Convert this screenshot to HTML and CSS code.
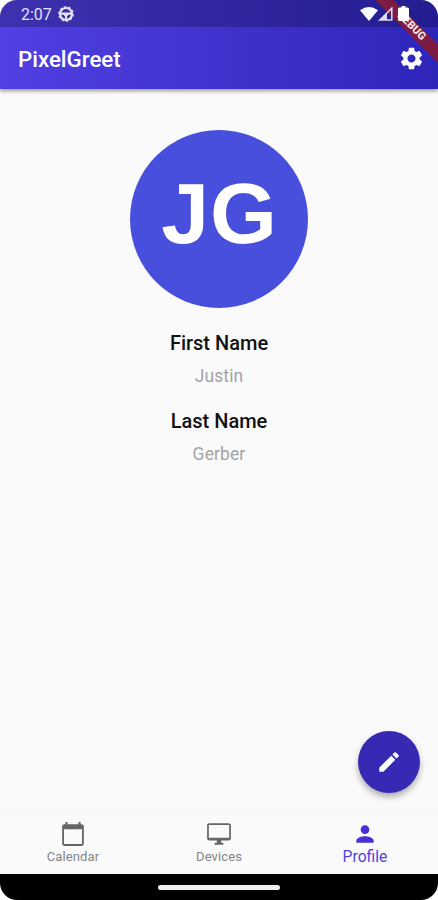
FILE: index.html
```
<!DOCTYPE html>
<html lang="en">
<head>
  <meta charset="UTF-8" />
  <meta name="viewport" content="width=device-width, initial-scale=1" />
  <title>PixelGreet</title>
  <link rel="stylesheet" href="styles.css">
</head>
<body>
  <div class="phone">

    <!-- HEADER -->
    <header class="header">
      <div class="status-bar">
        <span class="time">2:07</span>
        <svg class="status-app" viewBox="0 0 16 16">
          <circle cx="8" cy="8" r="6" fill="none" stroke="#e4e2f8" stroke-width="2.200" />
          <circle cx="8" cy="8" r="7.200" fill="none" stroke="#e4e2f8" stroke-width="1.200" stroke-dasharray="2.600 1.900" />
          <path d="M2 6.500h12v2.200H10.500L9 10.500V14H7v-3.500L5.500 8.700H2z" fill="#e4e2f8" />
        </svg>
        <div class="status-icons">
          <svg width="18" height="14" viewBox="0 0 18 14"><path d="M0 3.200Q9-3.200 18 3.200L9 14z" fill="#fff" /></svg>
          <svg width="15" height="14" viewBox="0 0 15 14">
            <path d="M1.800 13L13.800 1.200V13z" fill="none" stroke="#dedcf5" stroke-width="1.500" />
            <path d="M2 13L9 6v7z" fill="#dedcf5" />
          </svg>
          <svg class="battery" width="11" height="15" viewBox="0 0 11 15"><path d="M3.500 0h4v1.500H9.500Q11 1.500 11 3v10.500Q11 15 9.500 15h-8Q0 15 0 13.500V3q0-1.500 1.500-1.500h2z" fill="#fff" /></svg>
        </div>
      </div>
      <div class="app-bar">
        <h1 class="title">PixelGreet</h1>
        <svg class="settings" viewBox="0 0 24 24"><path fill="#fff" d="M19.14 12.94c.04-.3.06-.61.06-.94 0-.32-.02-.64-.07-.94l2.030-1.580c.18-.14.23-.41.12-.61l-1.920-3.320c-.12-.22-.37-.29-.59-.22l-2.390.96c-.5-.38-1.030-.7-1.620-.94L14.400 2.810c-.04-.24-.24-.41-.48-.41h-3.840c-.24 0-.43.17-.47.41L9.250 5.350c-.59.24-1.130.57-1.620.94L5.240 5.330c-.22-.08-.47 0-.59.22L2.740 8.870c-.12.21-.08.47.12.61l2.030 1.580c-.05.3-.09.63-.09.94s.02.64.07.94l-2.030 1.580c-.18.14-.23.41-.12.61l1.920 3.320c.12.22.37.29.59.22l2.390-.96c.5.38 1.030.7 1.620.94l.36 2.540c.05.24.24.41.48.41h3.840c.24 0 .44-.17.47-.41l.36-2.540c.59-.24 1.130-.56 1.620-.94l2.390.96c.22.08.47 0 .59-.22l1.920-3.320c.12-.22.07-.47-.12-.61zM12 15.600c-1.980 0-3.600-1.620-3.600-3.600s1.620-3.600 3.600-3.600 3.600 1.620 3.600 3.600-1.620 3.600-3.600 3.600z" /></svg>
      </div>
      <div class="debug">DEBUG</div>
    </header>

    <!-- PROFILE -->
    <main class="profile">
      <div class="avatar">JG</div>
      <div class="label">First Name</div>
      <div class="value">Justin</div>
      <div class="label">Last Name</div>
      <div class="value">Gerber</div>
    </main>

    <div class="fab">
      <svg width="26" height="26" viewBox="0 0 24 24"><path fill="#fff" d="M3 17.250V21h3.750L17.810 9.940l-3.750-3.750zM20.710 7.040c.39-.39.39-1.020 0-1.410l-2.340-2.340a.996.996 0 0 0-1.410 0l-1.830 1.830 3.750 3.750z" /></svg>
    </div>

    <!-- BOTTOM TABS -->
    <nav class="tabs">
      <div class="tab">
        <svg viewBox="0 0 24 24"><path d="M20 3h-1V1h-2v2H7V1H5v2H4c-1.100 0-2 .9-2 2v16c0 1.100.9 2 2 2h16c1.100 0 2-.9 2-2V5c0-1.100-.9-2-2-2zm.3 18.300H3.700V7.500h16.600z" /></svg>
        <span>Calendar</span>
      </div>
      <div class="tab">
        <svg viewBox="0 0 24 24"><path d="M21 2H3c-1.100 0-2 .9-2 2v12c0 1.100.9 2 2 2h7v2H8v2h8v-2h-2v-2h7c1.100 0 2-.9 2-2V4c0-1.100-.9-2-2-2zm.4 13.500H2.600V3.600h18.800z" /></svg>
        <span>Devices</span>
      </div>
      <div class="tab active">
        <svg viewBox="0 0 24 24"><path d="M12 12c2.210 0 4-1.790 4-4s-1.790-4-4-4-4 1.790-4 4 1.790 4 4 4zm0 2c-2.670 0-8 1.340-8 4v2h16v-2c0-2.660-5.330-4-8-4z" /></svg>
        <span>Profile</span>
      </div>
    </nav>
    <div class="nav-bar"><div class="handle"></div></div>
  </div>
</body>
</html>
```
FILE: styles.css
```
body {
  margin: 0;
  background: #fff;
  font-family: Roboto, sans-serif;
}

.phone {
  position: relative;
  display: flex;
  flex-direction: column;
  width: 438px;
  height: 900px;
  border-radius: 17px;
  overflow: hidden;
  background: #fafafa;
}

.header {
  position: relative;
  height: 89px;
  color: #fff;
  background: linear-gradient(to right, #5140e3, #2e25b9);
  box-shadow: 0 2px 4px rgba(0, 0, 0, 0.4);
}

.status-bar {
  display: flex;
  align-items: center;
  height: 27px;
  padding: 0 29px 0 21px;
  background: rgba(0, 0, 0, 0.22);
}

.time {
  font-size: 16px;
  line-height: 27px;
  padding-top: 2px;
  color: #e4e2f8;
}

.status-app {
  width: 16px;
  height: 16px;
  margin-left: 6px;
}

/* the system icons stay above the debug ribbon */
.status-icons {
  position: relative;
  z-index: 1;
  display: flex;
  align-items: center;
  margin-left: auto;
}

.battery {
  margin-left: 5px;
}

.app-bar {
  display: flex;
  align-items: center;
  justify-content: space-between;
  height: 62px;
  padding: 0 13px 0 18px;
}

.title {
  margin: 1px 0 0;
  font-size: 22.300px;
  font-weight: 500;
}

.settings {
  width: 27px;
  height: 27px;
}

.debug {
  position: absolute;
  top: 20px;
  right: -38px;
  width: 130px;
  height: 13px;
  transform: rotate(45deg);
  background: #7d1c43;
  color: #f3dfe6;
  font-size: 11px;
  font-weight: 900;
  line-height: 12px;
  text-align: center;
}

.profile {
  flex: 1;
  display: flex;
  flex-direction: column;
  align-items: center;
  padding-top: 41px;
}

.avatar {
  width: 178px;
  height: 178px;
  margin-bottom: 22px;
  border-radius: 50%;
  background: #474fdc;
  color: #fff;
  font: bold 86px/166px "Liberation Sans", Arial, sans-serif;
  letter-spacing: 1px;
  text-indent: 1px;
  text-align: center;
}

.label {
  font-size: 20px;
  font-weight: 500;
  line-height: 26px;
  color: #111;
}

.value {
  margin: 4px 0 15px;
  font-size: 17.500px;
  line-height: 33px;
  height: 33px;
  letter-spacing: 0.100px;
  color: #a3a3a3;
}

.fab {
  position: absolute;
  right: 18px;
  bottom: 107px;
  display: flex;
  align-items: center;
  justify-content: center;
  width: 62px;
  height: 62px;
  border-radius: 50%;
  background: #3829b5;
  box-shadow: 0 4px 6px rgba(0, 0, 0, 0.3);
}

.tabs {
  display: flex;
  height: 64px;
  border-top: 1px solid #f3f3f3;
}

.tab {
  flex: 1;
  display: flex;
  flex-direction: column;
  align-items: center;
  padding-top: 11px;
  color: #858585;
  font-size: 13px;
  letter-spacing: 0.100px;
  line-height: 20px;
}

.tab svg {
  width: 26px;
  height: 26px;
  fill: #666;
}

.tab.active {
  color: #5443dc;
  font-size: 15.700px;
  letter-spacing: 0;
  line-height: 19px;
}

.tab.active svg {
  fill: #4731d3;
}

.nav-bar {
  display: flex;
  align-items: center;
  justify-content: center;
  height: 26px;
  background: #000;
}

.handle {
  width: 122px;
  height: 5px;
  border-radius: 3px;
  background: #eee;
}
```
